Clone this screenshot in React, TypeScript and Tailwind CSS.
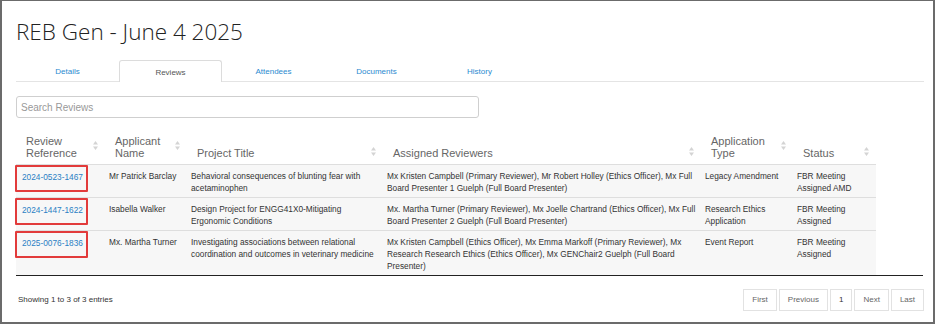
import React from 'react';

interface Review {
  ref: string;
  applicant: string;
  title: string;
  reviewers: string;
  type: string;
  status: string;
}

const reviews: Review[] = [
  {
    ref: '2024-0523-1467',
    applicant: 'Mr Patrick Barclay',
    title: 'Behavioral consequences of blunting fear with acetaminophen',
    reviewers:
      'Mx Kristen Campbell (Primary Reviewer), Mr Robert Holley (Ethics Officer), Mx Full Board Presenter 1 Guelph (Full Board Presenter)',
    type: 'Legacy Amendment',
    status: 'FBR Meeting Assigned AMD',
  },
  {
    ref: '2024-1447-1622',
    applicant: 'Isabella Walker',
    title: 'Design Project for ENGG41X0-Mitigating Ergonomic Conditions',
    reviewers:
      'Mx. Martha Turner (Primary Reviewer), Mx Joelle Chartrand (Ethics Officer), Mx Full Board Presenter 2 Guelph (Full Board Presenter)',
    type: 'Research Ethics Application',
    status: 'FBR Meeting Assigned',
  },
  {
    ref: '2025-0076-1836',
    applicant: 'Mx. Martha Turner',
    title: 'Investigating associations between relational coordination and outcomes in veterinary medicine',
    reviewers:
      'Mx Kristen Campbell (Ethics Officer), Mx Emma Markoff (Primary Reviewer), Mx Research Research Ethics (Ethics Officer), Mx GENChair2 Guelph (Full Board Presenter)',
    type: 'Event Report',
    status: 'FBR Meeting Assigned',
  },
];

const tabs = ['Details', 'Reviews', 'Attendees', 'Documents', 'History'];

function SortIcon() {
  return (
    <svg width="5" height="9" viewBox="0 0 5 9" className="shrink-0">
      <path d="M2.5 0 L5 3.5 L0 3.5 Z M2.5 9 L5 5.5 L0 5.5 Z" fill="#d4d4d4" />
    </svg>
  );
}

function HeadCell({ label, width }: { label: React.ReactNode; width: string }) {
  return (
    <th className={`${width} pr-[7px] pl-[10px] pb-[5px] align-bottom font-light`}>
      <div className="flex items-center justify-between gap-1">
        <span className="text-left text-[11px] leading-[12px] text-[#666]">{label}</span>
        <span className="mb-[3px] self-center">
          <SortIcon />
        </span>
      </div>
    </th>
  );
}

export default function App() {
  return (
    <div className="h-[324px] w-[936px] bg-white">
      <div className="flex h-[324px] w-[935px] flex-col border-2 border-t border-[#6b6b6b] bg-white pl-[14px] pr-[9px] font-['Liberation_Sans',Arial,sans-serif]">
        <h1 className="mt-[18px] font-['Open_Sans',sans-serif] text-[22.5px] leading-[26px] font-light text-[#222]">
          REB Gen - June 4 2025
        </h1>

        <div className="mt-[15px] flex h-[22px] border-b border-[#e4e4e4]">
          {tabs.map((t) => (
            <div
              key={t}
              className={`flex w-[103px] items-center justify-center pt-[2px] text-[8px] ${
                t === 'Reviews'
                  ? '-mb-px rounded-t-[3px] border border-b-0 border-[#dcdcdc] bg-white text-[#555]'
                  : 'text-[#2a8ad0]'
              }`}
            >
              {t}
            </div>
          ))}
        </div>

        <div className="mt-[14px] flex h-[22px] w-[463px] items-center rounded-[3px] border border-[#cfcfcf] px-[4px] text-[10px] text-[#999]">
          Search Reviews
        </div>

        <div className="mt-[16px] w-[907px] border-b-[1.5px] border-[#222]">
          <table className="w-[860px] table-fixed border-collapse">
            <thead>
              <tr className="h-[30px]">
                <HeadCell label={<>Review<br />Reference</>} width="w-[89px]" />
                <HeadCell label={<>Applicant<br />Name</>} width="w-[82px]" />
                <HeadCell label="Project Title" width="w-[196px]" />
                <HeadCell label="Assigned Reviewers" width="w-[318px]" />
                <HeadCell label={<>Application<br />Type</>} width="w-[92px]" />
                <HeadCell label="Status" width="w-[83px]" />
              </tr>
            </thead>
            <tbody className="text-[8.3px] leading-[12px] text-[#333]">
              {reviews.map((r) => (
                <tr key={r.ref} className="h-[33px] border-t border-[#dedede] bg-[#f7f7f7] align-top">
                  <td className="pl-0 pt-0">
                    <div className="ml-[-1px] flex h-[27px] w-[73px] items-start rounded-[1px] border-2 border-[#e23b3b] pl-[5px] pt-[4px]">
                      <span className="text-[#2a7fc4]">{r.ref}</span>
                    </div>
                  </td>
                  <td className="px-[4px] pt-[5px] pb-[3px]">{r.applicant}</td>
                  <td className="pl-[4px] pr-[8px] pt-[5px] pb-[3px]">{r.title}</td>
                  <td className="pl-[4px] pr-0 pt-[5px] pb-[3px]">{r.reviewers}</td>
                  <td className="px-[4px] pt-[5px] pb-[3px]">{r.type}</td>
                  <td className="px-[4px] pt-[5px] pb-[3px]">{r.status}</td>
                </tr>
              ))}
            </tbody>
          </table>
        </div>

        <div className="mt-[13px] flex items-center justify-between text-[8px]">
          <span className="pl-[2px] text-[#333]">Showing 1 to 3 of 3 entries</span>
          <div className="flex gap-[2px] text-[#666]">
            {['First', 'Previous', '1', 'Next', 'Last'].map((p) => (
              <div
                key={p}
                className={`flex h-[22px] items-center border border-[#e2e2e2] px-[8px] ${
                  p === '1' ? 'text-[#333]' : ''
                }`}
              >
                {p}
              </div>
            ))}
          </div>
        </div>
      </div>
    </div>
  );
}
